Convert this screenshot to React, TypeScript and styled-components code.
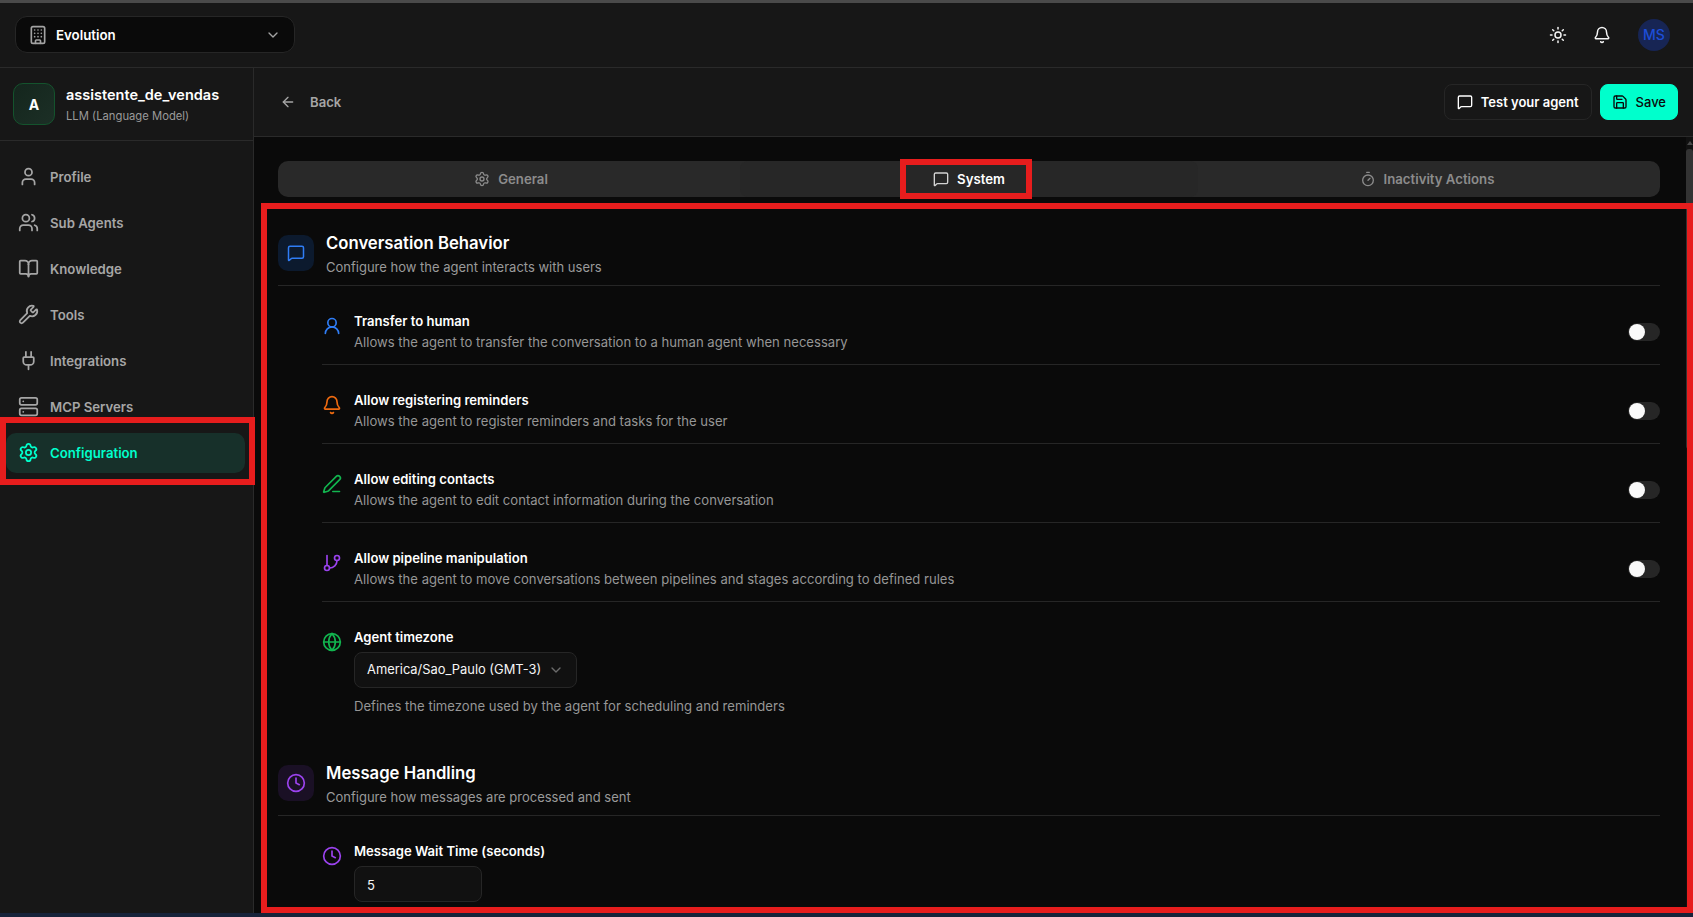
import React from 'react';
import styled, { createGlobalStyle } from 'styled-components';
import {
  ArrowLeft,
  Bell,
  BookOpen,
  Building,
  ChevronDown,
  Clock,
  GitBranch,
  Globe,
  MessageSquare,
  PenLine,
  Plug,
  Save,
  Server,
  Settings,
  Sun,
  Timer,
  User,
  UserRound,
  Users,
  Wrench,
} from 'lucide-react';

const GlobalStyle = createGlobalStyle`
  html, body {
    margin: 0;
    padding: 0;
    background: #171717;
    overflow: hidden;
  }
  * {
    box-sizing: border-box;
  }
  body {
    font-family: Inter, "Noto Sans", "Liberation Sans", sans-serif;
    color: #fff;
  }
`;

const Page = styled.div`
  position: relative;
  width: 1693px;
  height: 917px;
  display: flex;
  flex-direction: column;
  overflow: hidden;
`;

const TopStrip = styled.div`
  height: 3px;
  flex: none;
  background: #4a4a4a;
`;

const BottomStrip = styled.div`
  height: 4px;
  flex: none;
  background: #17233a;
`;

const Header = styled.header`
  height: 65px;
  flex: none;
  display: flex;
  align-items: center;
  justify-content: space-between;
  padding: 0 23px 1px 15px;
  background: #171717;
  border-bottom: 1px solid #2a2a2a;
`;

const OrgSelect = styled.div`
  width: 280px;
  height: 37px;
  display: flex;
  align-items: center;
  gap: 8px;
  padding: 0 13px 0 12px;
  background: #0a0a0a;
  border: 1px solid #262626;
  border-radius: 12px;
  font-size: 13.3px;
  font-weight: 600;
  color: #fff;
  svg:first-child {
    color: #a3a3a3;
  }
  svg:last-child {
    margin-left: auto;
    color: #a3a3a3;
  }
`;

const HeaderActions = styled.div`
  display: flex;
  align-items: center;
`;

const IconButton = styled.div`
  width: 36px;
  height: 36px;
  margin-right: 8px;
  display: flex;
  align-items: center;
  justify-content: center;
  color: #f5f5f5;
`;

const UserAvatar = styled.div`
  width: 32px;
  height: 32px;
  margin-left: 10px;
  border-radius: 50%;
  background: #172554;
  color: #1d4ed8;
  display: flex;
  align-items: center;
  justify-content: center;
  font-size: 14px;
  font-weight: 500;
`;

const Body = styled.div`
  flex: 1;
  min-height: 0;
  display: flex;
`;

const Sidebar = styled.aside`
  width: 254px;
  flex: none;
  background: #171717;
  border-right: 1px solid #2a2a2a;
`;

const AgentCard = styled.div`
  height: 73px;
  display: flex;
  align-items: center;
  gap: 11px;
  padding: 0 13px;
  border-bottom: 1px solid #2a2a2a;
`;

const AgentAvatar = styled.div`
  width: 42px;
  height: 42px;
  flex: none;
  border-radius: 10px;
  border: 1px solid #14532d;
  background: linear-gradient(135deg, #14261d, #1c2f26);
  display: flex;
  align-items: center;
  justify-content: center;
  font-size: 14px;
  font-weight: 700;
`;

const AgentName = styled.div`
  margin-top: 1px;
  font-size: 14.5px;
  line-height: 20px;
  font-weight: 600;
  color: #fff;
`;

const AgentKind = styled.div`
  font-size: 11.25px;
  line-height: 16px;
  margin-top: 3px;
  color: #9a9a9a;
`;

const Nav = styled.nav`
  display: flex;
  flex-direction: column;
  gap: 6px;
  padding: 16px 8px 0 6px;
`;

const NavItem = styled.div<{ $active?: boolean }>`
  height: 40px;
  display: flex;
  align-items: center;
  gap: 11px;
  padding: 0 0 1px 12px;
  border-radius: 10px;
  font-size: 13.2px;
  font-weight: 600;
  background: ${(p) => (p.$active ? '#17302a' : 'transparent')};
  color: ${(p) => (p.$active ? '#00ffcc' : '#a6a6a6')};
`;

const Main = styled.main`
  flex: 1;
  min-width: 0;
  display: flex;
  flex-direction: column;
  background: #0a0a0a;
`;

const TopBar = styled.div`
  height: 69px;
  flex: none;
  display: flex;
  align-items: center;
  justify-content: space-between;
  padding: 0 15px 0 26px;
  background: #171717;
  border-bottom: 1px solid #2a2a2a;
`;

const BackLink = styled.div`
  display: flex;
  align-items: center;
  gap: 14px;
  padding-bottom: 1px;
  font-size: 13.1px;
  font-weight: 600;
  color: #a6a6a6;
`;

const BarActions = styled.div`
  display: flex;
  gap: 8px;
`;

const ActionButton = styled.div<{ $primary?: boolean }>`
  height: 36px;
  display: flex;
  align-items: center;
  gap: 8px;
  padding: 0 ${(p) => (p.$primary ? '11px' : '12px')} 1px;
  border-radius: 8px;
  font-size: 13px;
  font-weight: ${(p) => (p.$primary ? 500 : 600)};
  background: ${(p) => (p.$primary ? '#00ffcc' : '#171717')};
  color: ${(p) => (p.$primary ? '#0a0a0a' : '#fff')};
  border: 1px solid ${(p) => (p.$primary ? '#00ffcc' : '#262626')};
`;

const ScrollArea = styled.div`
  flex: 1;
  min-height: 0;
  display: flex;
`;

const Content = styled.div`
  flex: 1;
  min-width: 0;
  padding: 24px 26px 0 24px;
  overflow: hidden;
`;

const ScrollRail = styled.div`
  width: 7px;
  flex: none;
  background: #111;
  display: flex;
  flex-direction: column;
  align-items: center;
`;

const ScrollArrow = styled.div`
  margin-top: 4px;
  width: 0;
  height: 0;
  border-left: 3px solid transparent;
  border-right: 3px solid transparent;
  border-bottom: 4px solid #4a4a4a;
`;

const ScrollThumb = styled.div`
  width: 100%;
  height: 300px;
  margin-top: 4px;
  border-radius: 3px;
  background: #333;
`;

const TabBar = styled.div`
  height: 36px;
  display: grid;
  grid-template-columns: repeat(3, 1fr);
  padding: 0 4px;
  background: #292929;
  border-radius: 10px;
`;

const Tab = styled.div<{ $active?: boolean }>`
  display: flex;
  align-items: center;
  justify-content: center;
  gap: 8px;
  padding-bottom: 1px;
  font-size: 13.2px;
  font-weight: 600;
  border-radius: 8px;
  background: ${(p) => (p.$active ? '#272727' : 'transparent')};
  color: ${(p) => (p.$active ? '#fff' : '#8c8c8c')};
  svg {
    color: ${(p) => (p.$active ? '#d4d4d4' : '#8c8c8c')};
  }
`;

const Section = styled.section`
  margin-top: 33px;
`;

const LaterSection = styled(Section)`
  margin-top: 44px;
`;

const SectionHead = styled.div`
  display: flex;
  align-items: center;
  gap: 12px;
  padding-bottom: 8px;
  border-bottom: 1px solid #262626;
`;

const SectionIcon = styled.div<{ $tint: string; $color: string }>`
  width: 36px;
  height: 36px;
  flex: none;
  margin-bottom: 1px;
  border-radius: 10px;
  display: flex;
  align-items: center;
  justify-content: center;
  background: ${(p) => p.$tint};
  color: ${(p) => p.$color};
`;

const SectionTitle = styled.h3`
  margin: 0;
  font-size: 16.7px;
  line-height: 27px;
  padding-bottom: 1px;
  font-weight: 600;
  color: #fff;
`;

const SectionSub = styled.p`
  margin: -1px 0 0;
  font-size: 13px;
  line-height: 20px;
  color: #9a9a9a;
`;

const RowList = styled.div`
  display: flex;
  flex-direction: column;
  gap: 25px;
  padding: 25px 0 0 44px;
`;

const Row = styled.div`
  display: flex;
  align-items: center;
  justify-content: space-between;
  padding-bottom: 12px;
  border-bottom: 1px solid #262626;
`;

const RowLeft = styled.div`
  display: flex;
  align-items: flex-start;
  gap: 12px;
`;

const RowIcon = styled.div<{ $color: string }>`
  width: 20px;
  height: 20px;
  margin-top: 5px;
  flex: none;
  color: ${(p) => p.$color};
`;

const RowLabel = styled.div`
  font-size: 13.1px;
  line-height: 20px;
  font-weight: 600;
  color: #fff;
`;

const RowHint = styled.div`
  margin-top: 1px;
  font-size: 13.1px;
  line-height: 20px;
  color: #969696;
`;

const FieldHint = styled(RowHint)`
  margin-top: 8px;
`;

const Toggle = styled.div`
  width: 32px;
  height: 18px;
  padding: 1px;
  border-radius: 9px;
  background: #262626;
`;

const ToggleThumb = styled.div`
  width: 16px;
  height: 16px;
  border-radius: 50%;
  background: #fafafa;
`;

const SelectBox = styled.div`
  width: 223px;
  height: 36px;
  margin-top: 5px;
  display: flex;
  align-items: center;
  justify-content: space-between;
  padding: 0 12px 1px 12px;
  background: #111;
  border: 1px solid #262626;
  border-radius: 8px;
  font-size: 12.9px;
  white-space: nowrap;
  color: #f5f5f5;
  svg {
    color: #6b6b6b;
  }
`;

const NumberBox = styled.div`
  width: 128px;
  height: 36px;
  margin-top: 5px;
  display: flex;
  align-items: center;
  padding: 2px 12px 0;
  background: #111;
  border: 1px solid #262626;
  border-radius: 8px;
  font-size: 13.1px;
  color: #f5f5f5;
`;

const RedFrame = styled.div`
  position: absolute;
  border: 6px solid #e71d1d;
  pointer-events: none;
`;

const NavFrame = styled(RedFrame)`
  left: 0;
  top: 417px;
  width: 255px;
  height: 68px;
`;

const TabFrame = styled(RedFrame)`
  left: 900px;
  top: 159px;
  width: 132px;
  height: 40px;
`;

const ContentFrame = styled(RedFrame)`
  left: 261px;
  top: 203px;
  width: 1432px;
  height: 710px;
`;

const navItems = [
  { label: 'Profile', icon: User },
  { label: 'Sub Agents', icon: Users },
  { label: 'Knowledge', icon: BookOpen },
  { label: 'Tools', icon: Wrench },
  { label: 'Integrations', icon: Plug },
  { label: 'MCP Servers', icon: Server },
  { label: 'Configuration', icon: Settings, active: true },
];

const behaviorRows = [
  {
    label: 'Transfer to human',
    hint: 'Allows the agent to transfer the conversation to a human agent when necessary',
    icon: UserRound,
    color: '#2f7df6',
  },
  {
    label: 'Allow registering reminders',
    hint: 'Allows the agent to register reminders and tasks for the user',
    icon: Bell,
    color: '#ee6a10',
  },
  {
    label: 'Allow editing contacts',
    hint: 'Allows the agent to edit contact information during the conversation',
    icon: PenLine,
    color: '#12b54f',
  },
  {
    label: 'Allow pipeline manipulation',
    hint: 'Allows the agent to move conversations between pipelines and stages according to defined rules',
    icon: GitBranch,
    color: '#9b43ee',
  },
];

export default function App() {
  return (
    <Page>
      <GlobalStyle />
      <TopStrip />
      <Header>
        <OrgSelect>
          <Building size={20} />
          Evolution
          <ChevronDown size={16} />
        </OrgSelect>
        <HeaderActions>
          <IconButton>
            <Sun size={18} />
          </IconButton>
          <IconButton>
            <Bell size={18} />
          </IconButton>
          <UserAvatar>MS</UserAvatar>
        </HeaderActions>
      </Header>

      <Body>
        <Sidebar>
          <AgentCard>
            <AgentAvatar>A</AgentAvatar>
            <div>
              <AgentName>assistente_de_vendas</AgentName>
              <AgentKind>LLM (Language Model)</AgentKind>
            </div>
          </AgentCard>
          <Nav>
            {navItems.map(({ label, icon: Icon, active }) => (
              <NavItem key={label} $active={active}>
                <Icon size={21} />
                {label}
              </NavItem>
            ))}
          </Nav>
        </Sidebar>

        <Main>
          <TopBar>
            <BackLink>
              <ArrowLeft size={16} />
              Back
            </BackLink>
            <BarActions>
              <ActionButton>
                <MessageSquare size={16} />
                Test your agent
              </ActionButton>
              <ActionButton $primary>
                <Save size={16} />
                Save
              </ActionButton>
            </BarActions>
          </TopBar>

          <ScrollArea>
            <Content>
              <TabBar>
                <Tab>
                  <Settings size={16} />
                  General
                </Tab>
                <Tab $active>
                  <MessageSquare size={16} />
                  System
                </Tab>
                <Tab>
                  <Timer size={16} />
                  Inactivity Actions
                </Tab>
              </TabBar>

              <Section>
                <SectionHead>
                  <SectionIcon $tint="#0c1a2e" $color="#2f7df6">
                    <MessageSquare size={18} />
                  </SectionIcon>
                  <div>
                    <SectionTitle>Conversation Behavior</SectionTitle>
                    <SectionSub>Configure how the agent interacts with users</SectionSub>
                  </div>
                </SectionHead>
                <RowList>
                  {behaviorRows.map(({ label, hint, icon: Icon, color }) => (
                    <Row key={label}>
                      <RowLeft>
                        <RowIcon $color={color}>
                          <Icon size={20} />
                        </RowIcon>
                        <div>
                          <RowLabel>{label}</RowLabel>
                          <RowHint>{hint}</RowHint>
                        </div>
                      </RowLeft>
                      <Toggle>
                        <ToggleThumb />
                      </Toggle>
                    </Row>
                  ))}
                  <RowLeft>
                    <RowIcon $color="#12b54f">
                      <Globe size={20} />
                    </RowIcon>
                    <div>
                      <RowLabel>Agent timezone</RowLabel>
                      <SelectBox>
                        America/Sao_Paulo (GMT-3)
                        <ChevronDown size={16} />
                      </SelectBox>
                      <FieldHint>Defines the timezone used by the agent for scheduling and reminders</FieldHint>
                    </div>
                  </RowLeft>
                </RowList>
              </Section>

              <LaterSection>
                <SectionHead>
                  <SectionIcon $tint="#1a1025" $color="#9b43ee">
                    <Clock size={20} />
                  </SectionIcon>
                  <div>
                    <SectionTitle>Message Handling</SectionTitle>
                    <SectionSub>Configure how messages are processed and sent</SectionSub>
                  </div>
                </SectionHead>
                <RowList>
                  <RowLeft>
                    <RowIcon $color="#9b43ee">
                      <Clock size={20} />
                    </RowIcon>
                    <div>
                      <RowLabel>Message Wait Time (seconds)</RowLabel>
                      <NumberBox>5</NumberBox>
                    </div>
                  </RowLeft>
                </RowList>
              </LaterSection>
            </Content>
            <ScrollRail>
              <ScrollArrow />
              <ScrollThumb />
            </ScrollRail>
          </ScrollArea>
        </Main>
      </Body>
      <BottomStrip />

      <NavFrame />
      <TabFrame />
      <ContentFrame />
    </Page>
  );
}
